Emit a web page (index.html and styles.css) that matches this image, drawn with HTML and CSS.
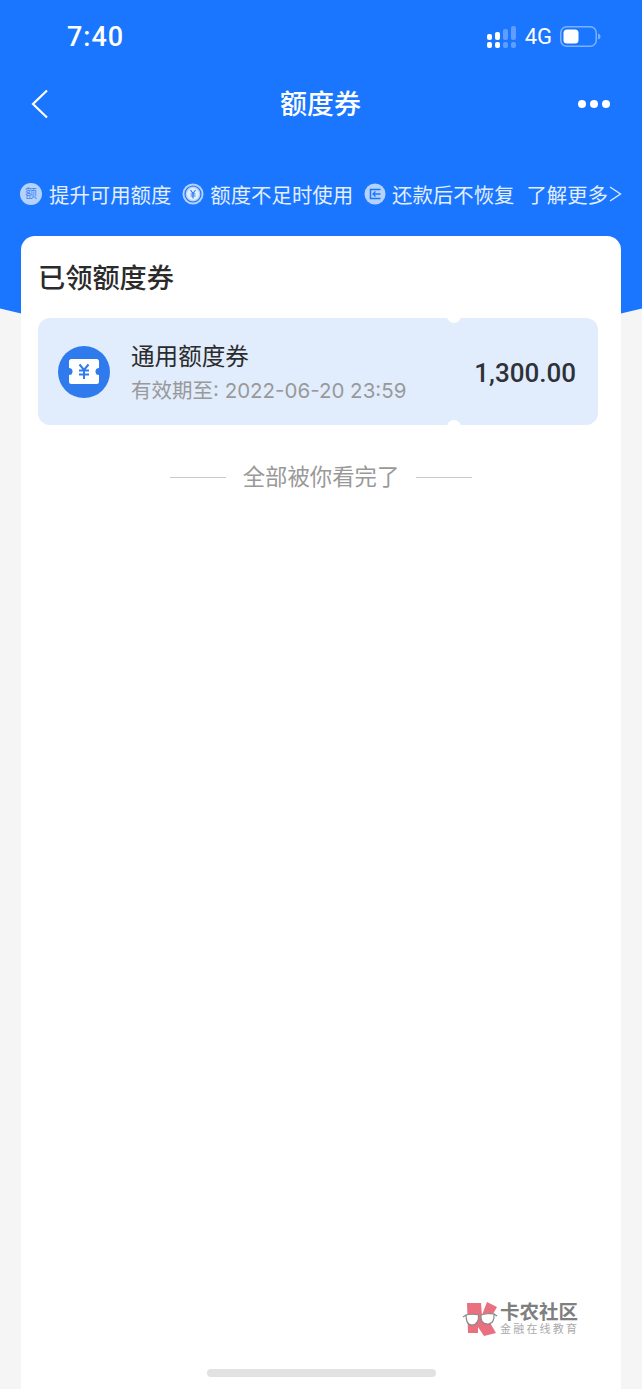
FILE: index.html
```html
<!DOCTYPE html>
<html lang="zh-CN">
<head>
    <meta charset="UTF-8">
    <meta name="viewport" content="width=device-width, initial-scale=1.0">
    <title>额度券</title>
    <link rel="stylesheet" href="styles.css">
</head>
<body>
<div class="page">
    <div class="hero-bg"></div>

    <div class="status-bar">
        <span class="time">7:40</span>
        <div class="status-right">
            <svg class="signal" width="30" height="22" viewBox="0 0 30 22">
                <rect x="0" y="8" width="5" height="6" rx="2" fill="#fff"/>
                <rect x="0" y="16" width="5" height="6" rx="2" fill="#fff"/>
                <rect x="8" y="6" width="5" height="8" rx="2" fill="#fff"/>
                <rect x="8" y="16" width="5" height="6" rx="2" fill="#fff"/>
                <rect x="16" y="3" width="5" height="11" rx="2" fill="#5f9eff"/>
                <rect x="16" y="16" width="5" height="6" rx="2" fill="#5f9eff"/>
                <rect x="24" y="0" width="5" height="14" rx="2" fill="#5f9eff"/>
                <rect x="24" y="16" width="5" height="6" rx="2" fill="#5f9eff"/>
            </svg>
            <span class="net">4G</span>
            <svg class="battery" width="41" height="21" viewBox="0 0 41 21">
                <rect x="0.75" y="0.75" width="35.5" height="19.5" rx="6" fill="none" stroke="#7db1ff" stroke-width="1.5"/>
                <rect x="3.5" y="3.5" width="15" height="14" rx="3.5" fill="#fff"/>
                <path d="M38 7.5c1.6.6 2.5 1.6 2.5 3s-.9 2.400-2.500 3z" fill="#7db1ff"/>
            </svg>
        </div>
    </div>

    <div class="nav-bar">
        <svg class="back" width="18" height="30" viewBox="0 0 18 30">
            <path d="M16 1.500 2 15l14 13.500" fill="none" stroke="#fff" stroke-width="2.200"/>
        </svg>
        <h1 class="nav-title">额度券</h1>
        <div class="more"><i></i><i></i><i></i></div>
    </div>

    <div class="tips">
        <span class="tip-badge">额</span>
        <span class="tip-text">提升可用额度</span>
        <svg class="tip-icon tip-icon-2" width="22" height="22" viewBox="0 0 22 22">
            <circle cx="11" cy="11" r="10.500" fill="#b5d2fd"/>
            <circle cx="11" cy="11" r="8" fill="none" stroke="#1a76fe" stroke-width="1.200"/>
            <circle cx="11" cy="11" r="6" fill="#e6f0ff"/>
            <path d="M8.500 7 11 10.500 13.500 7M11 10.500V15.500M8.500 11h5M8.500 13h5" fill="none" stroke="#2f7df5" stroke-width="1.200"/>
        </svg>
        <span class="tip-text">额度不足时使用</span>
        <svg class="tip-icon tip-icon-2" width="22" height="22" viewBox="0 0 22 22">
            <circle cx="11" cy="11" r="10.500" fill="#b5d2fd"/>
            <path d="M16.500 6.500H6.500v9h10" fill="none" stroke="#1a76fe" stroke-width="1.500"/>
            <path d="M16.500 11H9M11.500 8.500 9 11l2.500 2.500" fill="none" stroke="#1a76fe" stroke-width="1.300"/>
        </svg>
        <span class="tip-text">还款后不恢复</span>
        <span class="tip-text tip-more">了解更多<svg class="tip-arrow" width="13" height="16" viewBox="0 0 13 16"><path d="M1 1l10.500 7L1 15" fill="none" stroke="#e3eeff" stroke-width="1.300"/></svg></span>
    </div>

    <div class="card">
        <h2 class="card-title">已领额度券</h2>

        <div class="coupon">
            <div class="coupon-icon">
                <svg width="32" height="25" viewBox="0 0 32 25">
                    <path d="M3.500 0h25A2.500 2.500 0 0 1 31 2.500V9a3.500 3.500 0 0 0 0 7v6.500a2.500 2.500 0 0 1-2.500 2.500h-25A2.500 2.500 0 0 1 1 22.500V16a3.500 3.500 0 0 0 0-7V2.500A2.500 2.500 0 0 1 3.500 0z" fill="#fff"/>
                    <path d="M11.500 5.500 16 11l4.500-5.500M16 11v9M11 11.500h10M11 15.500h10" fill="none" stroke="#2f7bed" stroke-width="2"/>
                </svg>
            </div>
            <div class="coupon-info">
                <div class="coupon-name">通用额度券</div>
                <div class="coupon-date">有效期至: 2022-06-20 23:59</div>
            </div>
            <div class="coupon-amount">1,300.00</div>
        </div>

        <div class="list-end">
            <span class="end-line"></span>
            <span class="end-text">全部被你看完了</span>
            <span class="end-line"></span>
        </div>
    </div>

    <div class="watermark">
        <svg width="36" height="36" viewBox="0 0 36 36">
            <path d="M5 2h14l1 12 5-13 10 5-8 14 7 12-12 3-6-9v6H6z" fill="#e9707e"/>
            <path d="M1 16l3-2M32 13l3 2" fill="none" stroke="#8a8a8a" stroke-width="1.200"/>
            <path d="M4 14c3-1 10-1 12.500 0 .5 5-1.500 10-6.500 10S4 19 4 14zM19 14c3-1.500 10-1.500 13-1 .5 5-1 10-6.500 10S18.500 19 19 14z" fill="#fff" stroke="#8a8a8a" stroke-width="1.200"/>
        </svg>
        <div class="watermark-text">
            <div class="watermark-name">卡农社区</div>
            <div class="watermark-sub">金融在线教育</div>
        </div>
    </div>

    <div class="home-bar"></div>
</div>
</body>
</html>
```

FILE: styles.css
```css
html, body {
    margin: 0;
    padding: 0;
}
body {
    font-family: 'Roboto', 'Noto Sans CJK SC', sans-serif;
    color: #333;
    background-color: #f5f5f5;
}
.page {
    position: relative;
    width: 642px;
    height: 1389px;
    overflow: hidden;
    display: flex;
    flex-direction: column;
}
.hero-bg {
    position: absolute;
    top: 0;
    left: 0;
    width: 642px;
    height: 350px;
    background-color: #1a76fe;
    clip-path: circle(1323px at 321px -975px);
}
.status-bar {
    position: relative;
    height: 73px;
    display: flex;
    justify-content: space-between;
    align-items: center;
    padding: 0 41px 0 67px;
    color: #fff;
}
.time {
    font-size: 27px;
    font-weight: 500;
    letter-spacing: 1px;
}
.status-right {
    display: flex;
    align-items: center;
}
.signal {
    margin-right: 8px;
}
.net {
    font-size: 22px;
    margin-right: 8px;
}
.nav-bar {
    position: relative;
    height: 62px;
    display: flex;
    justify-content: space-between;
    align-items: center;
    padding: 0 32px 0 31px;
}
.nav-title {
    margin: 0 0 4px 14px;
    font-size: 27px;
    font-weight: 500;
    color: #fff;
}
.more {
    display: flex;
    gap: 4px;
}
.more i {
    width: 8px;
    height: 8px;
    border-radius: 50%;
    background-color: #fff;
}
.tips {
    position: relative;
    margin: 35px 0 18px;
    height: 48px;
    display: flex;
    align-items: center;
    padding-left: 20px;
    white-space: nowrap;
}
.tip-badge {
    flex: none;
    width: 22px;
    height: 22px;
    margin-right: 7px;
    border-radius: 50%;
    background-color: #b5d2fd;
    color: #3f86f0;
    font-size: 12px;
    line-height: 22px;
    text-align: center;
}
.tip-icon {
    flex: none;
}
.tip-icon-2 {
    margin-left: 11px;
    margin-right: 6px;
}
.tip-text {
    font-size: 20.400px;
    color: #e3eeff;
}
.tip-more {
    margin-left: 12px;
    display: flex;
    align-items: center;
}
.tip-arrow {
    margin-left: 1px;
}
.card {
    position: relative;
    flex: 1;
    margin: 0 21px;
    background-color: #fff;
    border-radius: 14px 14px 0 0;
    padding: 0 23px 0 17px;
}
.card-title {
    margin: 0;
    padding-top: 24px;
    font-size: 27.200px;
    line-height: 38px;
    font-weight: 500;
    color: #2b2b2b;
}
.coupon {
    position: relative;
    margin-top: 20px;
    height: 107px;
    display: flex;
    align-items: center;
    background-color: #e1edfd;
    border-radius: 12px;
    padding: 0 22px 0 20px;
}
/* ticket notches */
.coupon::before,
.coupon::after {
    content: "";
    position: absolute;
    left: 409px;
    width: 14px;
    height: 14px;
    border-radius: 50%;
    background-color: #fff;
}
.coupon::before {
    top: -9px;
}
.coupon::after {
    bottom: -9px;
}
.coupon-icon {
    flex: none;
    width: 52px;
    height: 52px;
    border-radius: 50%;
    background-color: #2f7bed;
    display: flex;
    align-items: center;
    justify-content: center;
}
.coupon-info {
    flex: 1;
    margin-left: 21px;
    padding-top: 4px;
}
.coupon-name {
    font-size: 23.600px;
    line-height: 34px;
    color: #2b2b2b;
}
.coupon-date {
    font-family: 'Inter', 'Noto Sans CJK SC', sans-serif;
    font-size: 20.500px;
    line-height: 34px;
    color: #999;
}
.coupon-amount {
    font-size: 26px;
    font-weight: 500;
    color: #2e3238;
    margin-top: 2px;
}
.list-end {
    margin-top: 36px;
    display: flex;
    align-items: center;
    justify-content: center;
    gap: 17px;
    padding-left: 6px;
}
.end-line {
    width: 56px;
    height: 1px;
    background-color: #c8c8c8;
}
.end-text {
    font-size: 22.400px;
    line-height: 32px;
    color: #999;
}
.watermark {
    position: absolute;
    left: 462px;
    top: 1301px;
    display: flex;
    align-items: center;
    gap: 2px;
}
.watermark-name {
    font-size: 19.500px;
    line-height: 21px;
    font-weight: 700;
    color: #7f7f7f;
}
.watermark-sub {
    font-size: 11px;
    line-height: 14px;
    color: #aaa;
    letter-spacing: 2.200px;
}
.home-bar {
    position: absolute;
    left: 207px;
    bottom: 12px;
    width: 229px;
    height: 8px;
    border-radius: 4px;
    background-color: #e2e2e2;
}
```
